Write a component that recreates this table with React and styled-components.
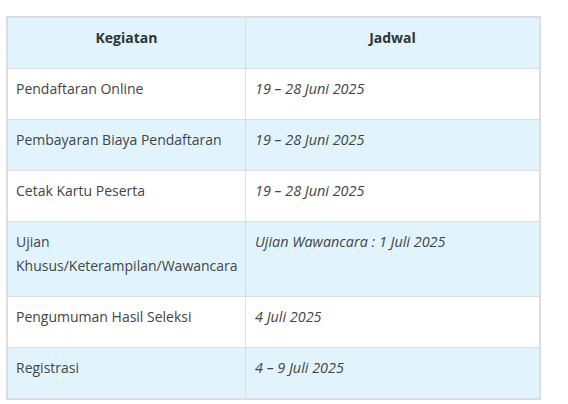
import React from "react";
import styled, { createGlobalStyle } from "styled-components";

const GlobalStyle = createGlobalStyle`
  body {
    margin: 0;
    background: #fff;
    font-family: "Open Sans", "Liberation Sans", sans-serif;
  }
`;

const rows = [
  { kegiatan: "Pendaftaran Online", jadwal: "19 – 28 Juni 2025" },
  { kegiatan: "Pembayaran Biaya Pendaftaran", jadwal: "19 – 28 Juni 2025" },
  { kegiatan: "Cetak Kartu Peserta", jadwal: "19 – 28 Juni 2025" },
  {
    kegiatan: "Ujian Khusus/Keterampilan/Wawancara",
    jadwal: "Ujian Wawancara : 1 Juli 2025",
  },
  { kegiatan: "Pengumuman Hasil Seleksi", jadwal: "4 Juli 2025" },
  { kegiatan: "Registrasi", jadwal: "4 – 9 Juli 2025" },
];

const App = () => {
  return (
    <Wrapper>
      <GlobalStyle />
      <ScheduleTable>
        <colgroup>
          <col style={{ width: 238 }} />
          <col />
        </colgroup>
        <thead>
          <tr>
            <HeadCell>Kegiatan</HeadCell>
            <HeadCell>Jadwal</HeadCell>
          </tr>
        </thead>
        <tbody>
          {rows.map((row, i) => (
            <Row key={row.kegiatan} $striped={i % 2 === 1} $last={i === rows.length - 1}>
              <Cell>{row.kegiatan}</Cell>
              <Cell $italic>{row.jadwal}</Cell>
            </Row>
          ))}
        </tbody>
      </ScheduleTable>
    </Wrapper>
  );
};

const Wrapper = styled.div`
  padding: 16px 0 0 6px;
`;

const ScheduleTable = styled.table`
  width: 535px;
  table-layout: fixed;
  border-collapse: separate;
  border-spacing: 0;
  border: 2px solid #dddddd;
  color: #444;
  font-size: 14px;
  line-height: 24px;
`;

const HeadCell = styled.th`
  height: 50px;
  box-sizing: border-box;
  padding: 8px 8px 18px;
  background: #e1f4fd;
  border-bottom: 1px solid #dddddd;
  font-weight: 700;
  color: #333;
  text-align: center;
  vertical-align: top;
  &:first-child {
    border-right: 1px solid #dddddd;
  }
`;

const Row = styled.tr`
  background: ${(p) => (p.$striped ? "#e1f4fd" : "#fff")};
  td {
    border-bottom: ${(p) => (p.$last ? "none" : "1px solid #dddddd")};
  }
`;

const Cell = styled.td`
  padding: 8px 8px 18px ${(p) => (p.$italic ? "9px" : "8px")};
  text-align: left;
  vertical-align: top;
  font-style: ${(p) => (p.$italic ? "italic" : "normal")};
  font-size: ${(p) => (p.$italic ? "14.4px" : "14px")};
  &:first-child {
    border-right: 1px solid #dddddd;
  }
`;

export default App;
